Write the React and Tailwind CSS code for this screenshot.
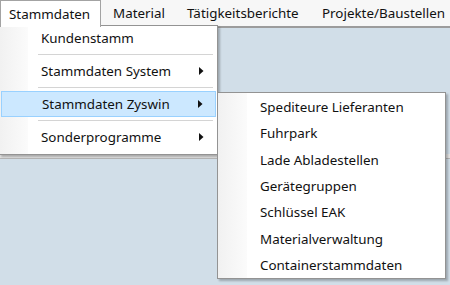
import { useState } from 'react';

const topItems = [
  { label: 'Stammdaten', w: 'w-[101px]', pl: 'pl-[8px]' },
  { label: 'Material', w: 'w-[74px]', pl: 'pl-[12px]' },
  { label: 'Tätigkeitsberichte', w: 'w-[135px]', pl: 'pl-[12px]' },
  { label: 'Projekte/Baustellen', w: 'w-[140px]', pl: 'pl-[12px]' },
];

const stammItems = [
  { label: 'Kundenstamm', first: true },
  { label: 'Stammdaten System', sub: true },
  { label: 'Stammdaten Zyswin', sub: true, active: true },
  { label: 'Sonderprogramme', sub: true },
];

const zyswinItems = [
  'Spediteure Lieferanten',
  'Fuhrpark',
  'Lade Abladestellen',
  'Gerätegruppen',
  'Schlüssel EAK',
  'Materialverwaltung',
  'Containerstammdaten',
];

function Arrow() {
  return (
    <svg width="5" height="8" viewBox="0 0 5 8" className="shrink-0">
      <path d="M0 0 L4.5 4 L0 8 Z" fill="#111" />
    </svg>
  );
}

export default function App() {
  const [open] = useState('Stammdaten');

  return (
    <div
      className="relative w-[450px] h-[285px] overflow-hidden bg-[#d1dee8] text-[13.4px] text-[#111]"
      style={{ fontFamily: '"Noto Sans", "Open Sans", sans-serif' }}
    >
      {/* Menüleiste */}
      <div className="flex h-[28px] bg-[#f7f7f7] border-b-2 border-[#9c9c9c]">
        {topItems.map((it) => (
          <div
            key={it.label}
            className={`${it.w} ${it.pl} shrink-0 flex items-center h-[26px] whitespace-nowrap ${open === it.label ? 'bg-white border border-b-0 border-[#a3a3a3] relative z-20 h-[27px]' : ''}`}
          >
            {it.label}
          </div>
        ))}
      </div>

      {/* Hintergrund unter dem Menü */}
      <div className="h-[126px]" />
      <div className="h-[5px] bg-[#e4e4e4] border-b border-[#b5b5b5]" />

      {/* Dropdown Stammdaten */}
      <div className="absolute left-[-1px] top-[25px] w-[219px] h-[130px] bg-white border border-[#939393] shadow-[2px_2px_2px_rgba(0,0,0,0.25)] z-10 flex">
        <div className="absolute left-0 top-0 bottom-0 w-[28px] bg-gradient-to-r from-[#f1f1f1] to-[#fbfbfb]" />
        <div className="relative flex flex-col w-full">
          {stammItems.map((it, i) => (
            <div key={it.label} className="flex flex-col">
              <div
                className={`${it.first ? 'h-[25px]' : 'h-[26px]'} mx-[1px] flex items-center pl-[40px] pr-[12px] whitespace-nowrap ${it.active ? 'bg-[#cce8ff] border border-[#99d1ff] pl-[39px] pr-[11px]' : ''}`}
              >
                <span className="flex-1">{it.label}</span>
                {it.sub && <Arrow />}
              </div>
              {i < stammItems.length - 1 && (
                <div className="h-[7px] flex items-center pl-[38px] pr-[4px]">
                  <div className="h-[2px] w-full border-t border-[#d4d4d4] border-b border-b-white" />
                </div>
              )}
            </div>
          ))}
        </div>
      </div>

      {/* Untermenü Stammdaten Zyswin */}
      <div className="absolute left-[217px] top-[92px] w-[229px] h-[187px] bg-white border border-[#939393] shadow-[2px_2px_2px_rgba(0,0,0,0.25)] z-10">
        <div className="absolute left-0 top-0 bottom-0 w-[29px] bg-gradient-to-r from-[#f1f1f1] to-[#fbfbfb]" />
        <div className="relative flex flex-col pt-[1px]">
          {zyswinItems.map((label) => (
            <div key={label} className="h-[26.3px] flex items-center pl-[42px] whitespace-nowrap">
              {label}
            </div>
          ))}
        </div>
      </div>
    </div>
  );
}
